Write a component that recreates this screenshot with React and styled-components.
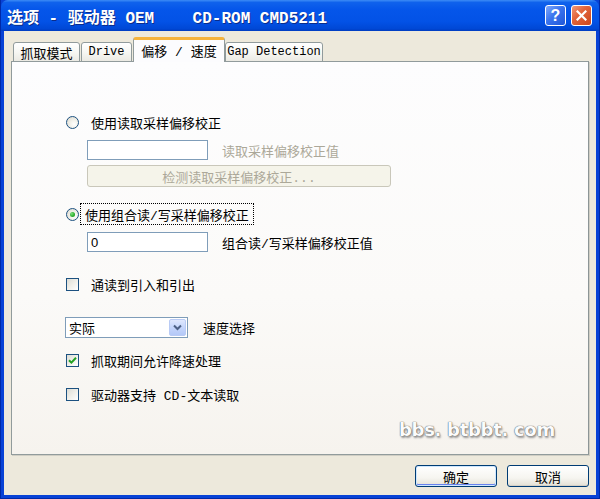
import React from 'react';
import styled, { createGlobalStyle } from 'styled-components';

const Global = createGlobalStyle`
    html, body {
        margin: 0;
        padding: 0;
        overflow: hidden;
        background: #fff;
    }
`;

const FONT = `"Liberation Mono", "Noto Sans CJK SC", monospace`;

const Window = styled.div`
    position: relative;
    width: 600px;
    height: 499px;
    box-sizing: border-box;
    display: flex;
    flex-direction: column;
    background: #0842d6;
    border-left: 1px solid #0029a8;
    border-right: 1px solid #0029a8;
    border-bottom: 1px solid #0029a8;
    font-family: ${FONT};
`;

const TitleBar = styled.div`
    height: 31px;
    flex: none;
    display: flex;
    align-items: center;
    padding: 0 7px 0 6px;
    background: linear-gradient(180deg, #3d8cf6 0%, #0f62ec 8%, #0556ea 30%, #0352e6 70%, #0048d6 92%, #003cc0 100%);
    border-radius: 7px 7px 0 0;
`;

const Title = styled.div`
    flex: 1;
    color: #fff;
    font-size: 16px;
    font-weight: bold;
    white-space: pre;
    text-shadow: 1px 1px 0 #0a2c8a;
    letter-spacing: 0;
`;

const CaptionButton = styled.div`
    width: 21px;
    height: 21px;
    box-sizing: border-box;
    margin-left: 5px;
    border: 1px solid #fff;
    border-radius: 3px;
    display: flex;
    align-items: center;
    justify-content: center;
    color: #fff;
    font-family: "Liberation Sans", sans-serif;
    font-weight: bold;
    font-size: 16px;
    background: ${p => p.$close
        ? 'linear-gradient(135deg, #f09a7a 0%, #e2653c 40%, #cc461c 100%)'
        : 'linear-gradient(135deg, #7fa8fb 0%, #3a74ee 45%, #1f56d8 100%)'};
`;

const Client = styled.div`
    flex: 1;
    margin: 0 3px 3px 3px;
    background: #ede9dc;
    padding: 7px 7px 7px 7px;
    display: flex;
    flex-direction: column;
`;

const TabRow = styled.div`
    display: flex;
    align-items: flex-end;
    height: 24px;
    position: relative;
    z-index: 2;
    margin-bottom: -1px;
`;

const Tab = styled.div`
    width: ${p => p.$w}px;
    margin-left: ${p => p.$ml || 0}px;
    box-sizing: border-box;
    height: ${p => (p.$active ? 25 : 20)}px;
    display: flex;
    align-items: center;
    justify-content: center;
    font-size: ${p => (p.$latin ? 12 : 13)}px;
    color: #000;
    border: 1px solid #919b9c;
    border-bottom: ${p => (p.$active ? 'none' : '1px solid #919b9c')};
    border-top: ${p => (p.$active ? '3px solid #f5b33c' : '1px solid #919b9c')};
    border-radius: 3px 3px 0 0;
    padding-bottom: ${p => (p.$active ? 2 : 0)}px;
    background: ${p => (p.$active
        ? '#fcfcfe'
        : 'linear-gradient(180deg, #ffffff 0%, #f7f7f3 50%, #ebeae3 100%)')};
`;

const Panel = styled.div`
    position: relative;
    height: 394px;
    box-sizing: border-box;
    border: 1px solid #919b9c;
    border-right-color: #8c9596;
    box-shadow: 1px 1px 0 #d0cec4;
    background: linear-gradient(180deg, #fdfdfe 0%, #fbfaf8 60%, #f6f3ee 100%);
    padding: 52px 0 0 54px;
    display: flex;
    flex-direction: column;
`;

const Row = styled.div`
    display: flex;
    align-items: center;
    height: ${p => p.$h}px;
    margin-top: ${p => p.$mt || 0}px;
    margin-left: ${p => p.$ml || 0}px;
`;

const Label = styled.span`
    font-size: 13px;
    color: ${p => (p.$disabled ? '#aca899' : '#000')};
    margin-left: ${p => p.$ml || 0}px;
    white-space: pre;
    ${p => p.$focus && `
        outline: 1px dotted #000;
        outline-offset: 0;
        padding: 1px 4px 1px 4px;
        margin-left: 2px;
        height: 18px;
        display: flex;
        align-items: center;
    `}
`;

const Radio = styled.div`
    width: 13px;
    height: 13px;
    box-sizing: border-box;
    border-radius: 50%;
    border: 1px solid #1c5180;
    background: radial-gradient(circle at 65% 65%, #ffffff 0%, #f2f1ea 40%, #d8d6cc 100%);
    display: flex;
    align-items: center;
    justify-content: center;
    &::after {
        content: '';
        display: ${p => (p.$checked ? 'block' : 'none')};
        width: 5px;
        height: 5px;
        border-radius: 50%;
        background: radial-gradient(circle at 35% 35%, #7ee07e 0%, #2fb02f 55%, #1a8a1a 100%);
    }
`;

const Check = styled.div`
    width: 13px;
    height: 13px;
    box-sizing: border-box;
    border: 1px solid #1c5180;
    background: linear-gradient(135deg, #dcdcd5 0%, #f0efe9 50%, #ffffff 100%);
    display: flex;
    align-items: center;
    justify-content: center;
`;

const TextBox = styled.div`
    width: ${p => p.$w}px;
    height: 20px;
    box-sizing: border-box;
    border: 1px solid #7f9db9;
    background: #fff;
    font-family: "Liberation Sans", sans-serif;
    font-size: 13px;
    padding-left: 3px;
    display: flex;
    align-items: center;
`;

const FlatButton = styled.div`
    width: 304px;
    height: 22px;
    box-sizing: border-box;
    border: 1px solid #c9c7ba;
    border-radius: 3px;
    background: #f5f4ea;
    color: #aca899;
    font-size: 13px;
    display: flex;
    align-items: center;
    justify-content: center;
`;

const Select = styled.div`
    width: 123px;
    height: 21px;
    box-sizing: border-box;
    border: 1px solid #7f9db9;
    background: #fff;
    display: flex;
    align-items: center;
    justify-content: space-between;
    padding: 1px 1px 1px 3px;
    font-size: 13px;
`;

const DropButton = styled.div`
    width: 17px;
    height: 17px;
    box-sizing: border-box;
    border: 1px solid #b9cbf5;
    border-radius: 2px;
    background: linear-gradient(180deg, #dfe8fd 0%, #c3d4fb 55%, #b4c8f7 100%);
    display: flex;
    align-items: center;
    justify-content: center;
`;

const Footer = styled.div`
    display: flex;
    justify-content: flex-end;
    gap: 10px;
    margin-top: 10px;
`;

const PushButton = styled.div`
    width: 82px;
    height: 22px;
    box-sizing: border-box;
    border: 1px solid #003c74;
    border-radius: 3px;
    background: linear-gradient(180deg, #ffffff 0%, #f6f5f0 60%, #e3e0d5 100%);
    box-shadow: ${p => (p.$default
        ? 'inset 0 0 0 1px #cee7ff, inset 0 -1px 0 1px #6982ee'
        : 'inset 0 -1px 0 0 #d6d0c5')};
    font-size: 13px;
    display: flex;
    align-items: center;
    justify-content: center;
    color: #000;
`;

const Watermark = styled.div`
    position: absolute;
    left: 398px;
    top: 419px;
    font-family: "DejaVu Sans", sans-serif;
    font-weight: bold;
    font-size: 18px;
    letter-spacing: -0.3px;
    color: #fbfbfb;
    text-shadow: 0 0 1px #5d5d5d, 0 0 1px #5d5d5d, 1px 2px 2px #9a9a9a;
    white-space: pre;
`;

function CheckMark() {
    return (
        <svg width="9" height="9" viewBox="0 0 9 9">
            <path d="M1 4.2 L3.4 6.6 L8 1.8" fill="none" stroke="#21a121" strokeWidth="2" />
        </svg>
    );
}

function Chevron() {
    return (
        <svg width="9" height="7" viewBox="0 0 9 7">
            <path d="M1 1.5 L4.5 5 L8 1.5" fill="none" stroke="#4d6185" strokeWidth="2" />
        </svg>
    );
}

function CloseX() {
    return (
        <svg width="11" height="11" viewBox="0 0 11 11">
            <path d="M1.5 1.5 L9.5 9.5 M9.5 1.5 L1.5 9.5" stroke="#fff" strokeWidth="2.2" strokeLinecap="square" />
        </svg>
    );
}

export default function App() {
    return (
        <Window>
            <Global />
            <TitleBar>
                <Title>{'选项 - 驱动器 OEM    CD-ROM CMD5211'}</Title>
                <CaptionButton>?</CaptionButton>
                <CaptionButton $close><CloseX /></CaptionButton>
            </TitleBar>
            <Client>
                <TabRow>
                    <Tab $w={67} $ml={2}>抓取模式</Tab>
                    <Tab $w={51} $ml={1} $latin>Drive</Tab>
                    <Tab $w={92} $ml={1} $active>偏移 / 速度</Tab>
                    <Tab $w={98} $latin>Gap Detection</Tab>
                </TabRow>
                <Panel>
                    <Row $h={17}>
                        <Radio />
                        <Label $ml={12}>使用读取采样偏移校正</Label>
                    </Row>
                    <Row $h={20} $mt={9} $ml={21}>
                        <TextBox $w={121} />
                        <Label $ml={14} $disabled>读取采样偏移校正值</Label>
                    </Row>
                    <Row $h={22} $mt={5} $ml={21}>
                        <FlatButton>检测读取采样偏移校正...</FlatButton>
                    </Row>
                    <Row $h={20} $mt={17}>
                        <Radio $checked />
                        <Label $ml={6} $focus>使用组合读/写采样偏移校正</Label>
                    </Row>
                    <Row $h={20} $mt={8} $ml={21}>
                        <TextBox $w={121}>0</TextBox>
                        <Label $ml={14}>组合读/写采样偏移校正值</Label>
                    </Row>
                    <Row $h={17} $mt={24}>
                        <Check />
                        <Label $ml={12}>通读到引入和引出</Label>
                    </Row>
                    <Row $h={21} $mt={24} $ml={-1}>
                        <Select>
                            <span>实际</span>
                            <DropButton><Chevron /></DropButton>
                        </Select>
                        <Label $ml={15}>速度选择</Label>
                    </Row>
                    <Row $h={17} $mt={14}>
                        <Check><CheckMark /></Check>
                        <Label $ml={12}>抓取期间允许降速处理</Label>
                    </Row>
                    <Row $h={17} $mt={17}>
                        <Check />
                        <Label $ml={12}>驱动器支持 CD-文本读取</Label>
                    </Row>
                </Panel>
                <Footer>
                    <PushButton $default>确定</PushButton>
                    <PushButton>取消</PushButton>
                </Footer>
            </Client>
            <Watermark>bbs. btbbt. com</Watermark>
        </Window>
    );
}
